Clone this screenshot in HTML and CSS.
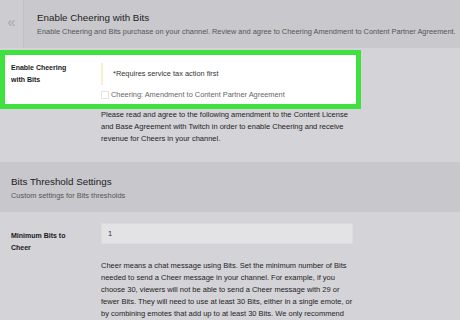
FILE: index.html
```html
<!DOCTYPE html>
<html lang="en">
<head>
  <meta charset="UTF-8" />
  <title>Bits Settings</title>
  <link rel="stylesheet" href="styles.css">
</head>
<body>
  <header class="top">
    <div class="collapse">&laquo;</div>
    <div class="heading">
      <h2>Enable Cheering with Bits</h2>
      <p>Enable Cheering and Bits purchase on your channel. Review and agree to Cheering Amendment to Content Partner Agreement.</p>
    </div>
  </header>

  <section class="body first">
    <div class="highlight">
      <div class="label">Enable Cheering<br>with Bits</div>
      <div class="field">
        <div class="note">*Requires service tax action first</div>
        <label class="check"><span class="box"></span>Cheering: Amendment to Content Partner Agreement</label>
      </div>
    </div>
    <p class="desc">Please read and agree to the following amendment to the Content License<br>
      and Base Agreement with Twitch in order to enable Cheering and receive<br>
      revenue for Cheers in your channel.</p>
  </section>

  <header class="sub">
    <h2>Bits Threshold Settings</h2>
    <p>Custom settings for Bits thresholds</p>
  </header>

  <section class="body">
    <div class="row">
      <div class="label">Minimum Bits to<br>Cheer</div>
      <div class="field">
        <div class="input">1</div>
        <p class="desc">Cheer means a chat message using Bits. Set the minimum number of Bits<br>
          needed to send a Cheer message in your channel. For example, if you<br>
          choose 30, viewers will not be able to send a Cheer message with 29 or<br>
          fewer Bits. They will need to use at least 30 Bits, either in a single emote, or<br>
          by combining emotes that add up to at least 30 Bits. We only recommend</p>
      </div>
    </div>
  </section>
</body>
</html>
```

FILE: styles.css
```css
body {
  font-family: 'Liberation Sans', Arial, sans-serif;
  margin: 0;
  padding: 0;
  background-color: #d4d3d7;
  color: #222;
  width: 460px;
  height: 320px;
  overflow: hidden;
}
h2 {
  margin: 0;
  font-weight: normal;
  font-size: 9.8px;
  color: #1c1c1c;
}
.top {
  display: flex;
  height: 48px;
  background: #c9c8cc;
}
.collapse {
  width: 24px;
  border-right: 1px solid #c2c1c5;
  background: #cdccd0;
  color: #a8a8ab;
  font-size: 15px;
  text-align: center;
  padding-top: 13px;
  box-sizing: border-box;
}
.heading {
  padding: 12px 0 0 13px;
}
.heading p, .sub p {
  margin: 4px 0 0;
  font-size: 7.4px;
  color: #555;
  white-space: nowrap;
}
.body {
  padding-top: 2px;
}
.first {
  height: 114px;
  box-sizing: border-box;
}
.highlight {
  display: flex;
  width: 351px;
  height: 49px;
  border: 5px solid #3fe13f;
  background: #fff;
}
.label {
  width: 90px;
  padding: 7px 0 0 6px;
  font-size: 7px;
  font-weight: bold;
  line-height: 12px;
  color: #1a1a1a;
}
.note {
  margin-top: 8px;
  height: 22px;
  line-height: 22px;
  border-left: 2px solid #f4f0d2;
  padding-left: 10px;
  font-size: 7.4px;
  color: #333;
}
.check {
  display: flex;
  align-items: center;
  margin-top: 5px;
  font-size: 7.4px;
  color: #666;
}
.box {
  width: 6px;
  height: 6px;
  border: 1px solid #e4e4e4;
  margin-right: 2px;
}
.desc {
  margin: 0 0 0 101px;
  font-size: 7.5px;
  line-height: 12px;
  color: #1e1e1e;
  white-space: nowrap;
}
.sub {
  height: 50px;
  box-sizing: border-box;
  padding: 14px 0 0 11px;
  background: #c8c7cb;
}
.row {
  display: flex;
  padding-top: 9px;
}
.row .label {
  width: 90px;
  padding: 7px 0 0 11px;
}
.row .field {
  flex: 1;
}
.row .desc {
  margin: 16px 0 0;
}
.input {
  width: 244px;
  height: 19px;
  line-height: 19px;
  padding-left: 6px;
  background: #e3e3e5;
  border: 1px solid #dcdcde;
  font-size: 7.5px;
  color: #333;
}
```
